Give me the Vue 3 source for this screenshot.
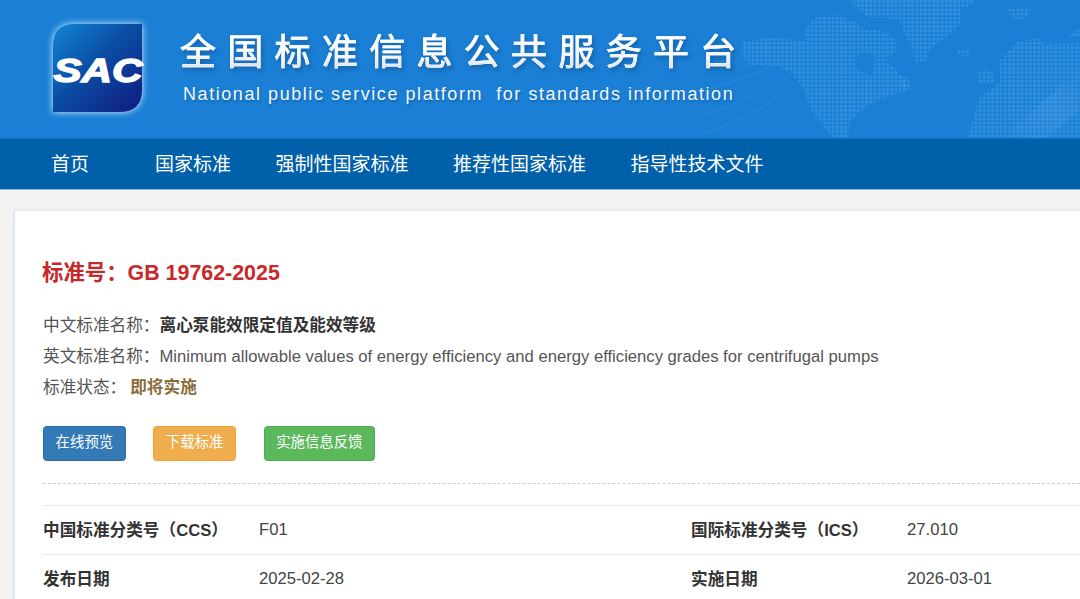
<script setup>
const nav = ['首页', '国家标准', '强制性国家标准', '推荐性国家标准', '指导性技术文件']
const buttons = [
  { text: '在线预览', cls: 'primary' },
  { text: '下载标准', cls: 'warning' },
  { text: '实施信息反馈', cls: 'success' }
]
const rows = [
  ['中国标准分类号（CCS）', 'F01', '国际标准分类号（ICS）', '27.010'],
  ['发布日期', '2025-02-28', '实施日期', '2026-03-01']
]
</script>

<template>
  <div class="page">
    <header class="banner">
      <svg class="map" width="380" height="138" viewBox="700 0 380 138" aria-hidden="true">
        <defs>
          <pattern id="dots" width="4.2" height="4.2" patternUnits="userSpaceOnUse">
            <rect width="2.8" height="2.8" fill="#4aa2ea" fill-opacity="0.5" />
          </pattern>
          <linearGradient id="sheen" x1="0" y1="1" x2="1" y2="0">
            <stop offset="0" stop-color="#fff" stop-opacity="0" />
            <stop offset="0.55" stop-color="#fff" stop-opacity="0.07" />
            <stop offset="1" stop-color="#fff" stop-opacity="0" />
          </linearGradient>
        </defs>
        <g fill="none" stroke="#fff" stroke-opacity="0.08">
          <path d="M700 92Q745 80 778 62" />
          <path d="M700 116Q745 102 778 80" />
          <path d="M700 134Q745 122 778 96" />
        </g>
        <path fill="url(#dots)" fill-rule="evenodd" d="M743 42L773 37L805 42L805 29L815 18L835 14L855 22L865 30L880 30L895 38L897 50L885 62L895 68L908 85L905 92L887 97L865 107L850 122L848 138L832 138L812 112L803 87L790 72L775 65L748 65L743 55ZM853 62L862 52L875 55L873 75L862 72Z" />
        <path fill="url(#dots)" d="M850 3L855 0L973 0L975 4L962 8L960 25L945 38L930 50L925 63L915 63L912 48L905 35L900 22L890 18L870 18Z" />
        <path fill="url(#dots)" d="M957 49L971 49L969 56L958 55Z" />
        <path fill="url(#dots)" d="M900 76L908 77L912 90L901 88Z" />
        <path fill="url(#dots)" d="M1007 9L1031 9L1027 17L1015 21Z" />
        <path fill="url(#dots)" d="M977 74L985 68L993 72L994 84L978 83Z" />
        <path fill="url(#dots)" d="M1068 36L1080 28L1080 38Z" />
        <path fill="url(#dots)" d="M967 138L980 97L1000 82L1000 60L1017 42L1037 38L1045 44L1080 43L1080 138Z" />
        <path fill="url(#sheen)" d="M1000 138L1080 70L1080 110L1045 138Z" />
      </svg>

      <svg class="logo" width="110" height="110" viewBox="0 0 110 110" role="img" aria-label="SAC">
        <defs>
          <linearGradient id="logoFill" x1="0" y1="0" x2="1" y2="1">
            <stop offset="0" stop-color="#1186d6" />
            <stop offset="0.45" stop-color="#0a4ea4" />
            <stop offset="1" stop-color="#121a80" />
          </linearGradient>
          <filter id="halo" x="-20%" y="-20%" width="140%" height="140%">
            <feGaussianBlur stdDeviation="3.5" />
          </filter>
        </defs>
        <path class="halo" filter="url(#halo)" d="M31 8H98V74Q98 96 75 96H9V30Q9 8 31 8Z" />
        <path fill="url(#logoFill)" d="M31 8H98V74Q98 96 75 96H9V30Q9 8 31 8Z" />
        <text class="logo-text" x="54" y="66" text-anchor="middle" textLength="89" lengthAdjust="spacingAndGlyphs">SAC</text>
      </svg>

      <div class="brand">
        <div class="brand-cn">全国标准信息公共服务平台</div>
        <div class="brand-en">National public service platform&nbsp; for standards information</div>
      </div>
    </header>

    <nav class="nav">
      <a v-for="item in nav" :key="item" class="nav-item">{{ item }}</a>
    </nav>

    <main class="card">
      <h1 class="std-no">标准号：GB 19762-2025</h1>

      <p class="line">中文标准名称：<b>离心泵能效限定值及能效等级</b></p>
      <p class="line">英文标准名称：Minimum allowable values of energy efficiency and energy efficiency grades for centrifugal pumps</p>
      <p class="line">标准状态：<b class="status">即将实施</b></p>

      <div class="actions">
        <button v-for="b in buttons" :key="b.text" class="btn" :class="b.cls">{{ b.text }}</button>
      </div>

      <div class="dash"></div>

      <div class="meta">
        <div v-for="row in rows" :key="row[0]" class="meta-row">
          <b>{{ row[0] }}</b>
          <span>{{ row[1] }}</span>
          <b>{{ row[2] }}</b>
          <span>{{ row[3] }}</span>
        </div>
      </div>
    </main>
  </div>
</template>

<style>
html, body {
  margin: 0;
  background: #f3f2f0;
  overflow: hidden;
}
</style>

<style scoped>
.page {
  width: 1080px;
  height: 599px;
  overflow: hidden;
  font-family: "Liberation Sans", "Noto Sans CJK SC", sans-serif;
  color: #333;
}
.banner {
  position: relative;
  height: 138px;
  background: #1a7fd5;
  display: flex;
  align-items: flex-start;
  box-sizing: border-box;
  padding: 16px 0 0 44px;
  overflow: hidden;
}
.map {
  position: absolute;
  right: 0;
  top: 0;
}
.logo {
  flex: none;
}
.halo {
  fill: #d8f0ff;
}
.logo-text {
  fill: #fff;
  font-family: "Liberation Sans", sans-serif;
  font-weight: 700;
  font-style: italic;
  font-size: 34px;
  stroke: #fff;
  stroke-width: 1.4px;
}
.brand {
  margin-left: 26px;
  position: relative;
}
.brand-cn {
  margin-top: 12px;
  font-size: 36px;
  line-height: 50px;
  letter-spacing: 11.3px;
  white-space: nowrap;
  background: linear-gradient(#ffffff 45%, #d5dbe2 90%);
  -webkit-background-clip: text;
  background-clip: text;
  color: transparent;
  -webkit-text-stroke: 0.7px #f4f6f8;
  filter: drop-shadow(2px 3px 2px rgba(10, 50, 100, 0.35));
}
.brand-en {
  margin-top: 4px;
  margin-left: 3px;
  font-size: 18px;
  line-height: 24px;
  letter-spacing: 1.56px;
  white-space: nowrap;
  color: #f2f7fc;
  text-shadow: 1px 2px 2px rgba(10, 50, 100, 0.3);
}
.nav {
  height: 52px;
  background: #0060aa;
  border-top: 1px solid #0f6fbd;
  border-bottom: 1px solid #8db9dc;
  box-sizing: border-box;
  display: flex;
  padding: 0 0 3px 51px;
  gap: 44.5px;
  align-items: center;
  color: #fff;
  font-size: 19px;
}
.nav-item {
  white-space: nowrap;
}
.nav-item:first-child {
  margin-right: 21.5px;
}
.card {
  margin: 20px 0 0 13px;
  background: #fff;
  border: 1px solid #d9e9f5;
  border-left-width: 2px;
  border-right: 0;
  border-radius: 3px 0 0 0;
  box-sizing: border-box;
  height: 420px;
  padding: 47px 0 0 28px;
}
.std-no {
  margin: 0 0 22px -1px;
  font-size: 21.4px;
  line-height: 30px;
  font-weight: 700;
  color: #c7282a;
}
.line {
  margin: 0;
  font-size: 16.65px;
  line-height: 31px;
  white-space: nowrap;
  color: #555;
}
.line b {
  color: #333;
}
.line .status {
  color: #8a6d3b;
  margin-left: 4px;
}
.actions {
  display: flex;
  margin-top: 23px;
  gap: 27.5px;
}
.btn {
  height: 35px;
  padding: 0 11.6px 6px;
  border: 1px solid transparent;
  border-radius: 3.5px;
  color: #fff;
  font: inherit;
  font-size: 14.4px;
}
.primary { background: #337ab7; border-color: #2e6da4; }
.warning { background: #f0ad4e; border-color: #eea236; }
.success { background: #5cb85c; border-color: #4cae4c; }
.dash {
  margin-top: 22px;
  border-top: 1px dashed #ccc;
}
.meta {
  margin-top: 21px;
}
.meta-row {
  display: grid;
  grid-template-columns: 216px 432px 216px 1fr;
  height: 49px;
  align-items: center;
  border-top: 1px solid #e7e7e7;
  box-sizing: border-box;
  font-size: 16.65px;
  white-space: nowrap;
  color: #444;
}
.meta-row b {
  color: #333;
  margin-top: -3px;
}
</style>
